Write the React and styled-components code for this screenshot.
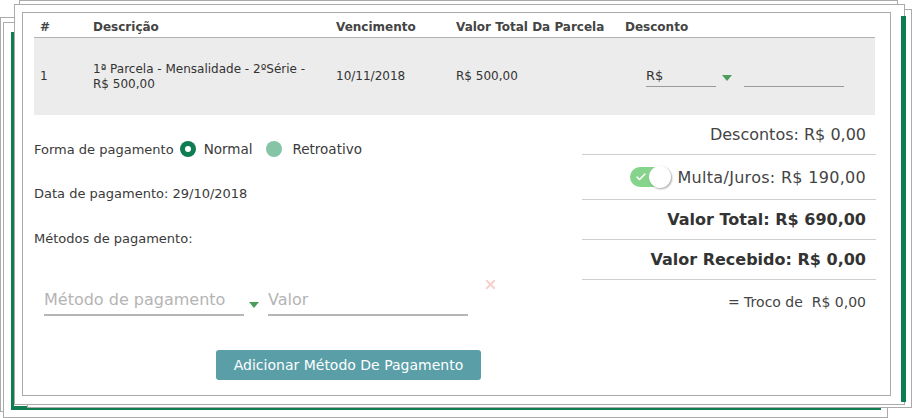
import styled, { createGlobalStyle } from 'styled-components';
import { X, Check } from 'lucide-react';

const GREEN = '#0f7c52';

const GlobalStyle = createGlobalStyle`
  html, body { margin: 0; padding: 0; background: #fff; }
  body {
    font-family: "DejaVu Sans", Verdana, sans-serif;
    color: #3a3a3a;
  }
`;

const Stage = styled.div`
  position: relative;
  width: 912px;
  height: 418px;
  padding: 12px 0 0 22px;
  box-sizing: border-box;
  overflow: hidden;
`;

// stacked sheets behind the main dialog
const Sheet = styled.div`
  position: absolute;
  box-sizing: border-box;
  left: ${({ $l }) => $l}px;
  top: ${({ $t }) => $t}px;
  width: ${({ $r, $l }) => $r - $l + 1}px;
  height: ${({ $b, $t }) => $b - $t + 1}px;
  background: #fff;
  border: 1px solid #ababab;
  ${({ $kind }) => $kind === 'greenLB' && `
    border: none;
    border-left: 3px solid ${GREEN};
    border-bottom: 4px solid ${GREEN};
  `}
  ${({ $kind }) => $kind === 'greenR' && `
    border: none;
    border-right: 5px solid ${GREEN};
  `}
`;

const sheets = [
  { l: 0, t: 17, r: 880, b: 411 },
  { l: 3, t: 22, r: 887, b: 417 },
  { l: 19, t: 0, r: 897, b: 400 },
  { l: 11, t: 32, r: 880, b: 409, kind: 'greenLB' },
  { l: 27, t: 9, r: 911, b: 407 },
  { l: 14, t: 4, r: 904, b: 404 },
  { l: 600, t: 16, r: 905, b: 401, kind: 'greenR' },
];

const Panel = styled.div`
  position: relative;
  width: 869px;
  height: 384px;
  box-sizing: border-box;
  border: 1px solid #a9a9a9;
  background: #fff;
  padding: 4px 15px 0 11px;
`;

const COLS = '53px 243px 120px 169px 1fr';

const HeadRow = styled.div`
  display: grid;
  grid-template-columns: ${COLS};
  height: 20px;
  align-items: center;
  border-bottom: 1px solid #b3b3b3;
  font-size: 12px;
  font-weight: bold;
  color: #444;
`;

const BodyRow = styled.div`
  display: grid;
  grid-template-columns: ${COLS};
  height: 77px;
  align-items: center;
  background: #ececec;
  font-size: 12px;
  line-height: 15px;
  color: #333;
`;

const Cell = styled.div`
  padding-left: 6px;
`;

const DiscountCell = styled.div`
  display: flex;
  align-items: center;
  padding-left: 27px;
`;

const SmallSelect = styled.div`
  width: 70px;
  height: 20px;
  box-sizing: border-box;
  border-bottom: 1px solid #9a9a9a;
  font-size: 13px;
  line-height: 18px;
`;

const SmallInput = styled.div`
  width: 100px;
  height: 20px;
  box-sizing: border-box;
  border-bottom: 1px solid #9a9a9a;
  margin-left: 12px;
`;

const Caret = styled.span`
  display: block;
  width: 0;
  height: 0;
  margin-left: ${({ $ml }) => $ml}px;
  margin-top: ${({ $mt }) => $mt || 0}px;
  margin-bottom: ${({ $mb }) => $mb || 0}px;
  border-left: 5px solid transparent;
  border-right: 5px solid transparent;
  border-top: 6px solid #4c9c5c;
`;

const Bottom = styled.div`
  display: grid;
  grid-template-columns: 548px 294px;
`;

const LeftCol = styled.div`
  display: flex;
  flex-direction: column;
  font-size: 13px;
  color: #3a3a3a;
`;

const Line = styled.div`
  display: flex;
  align-items: center;
  height: 24px;
  margin-top: ${({ $mt }) => $mt}px;
`;

const Option = styled.span`
  font-size: 13.5px;
`;

const Radio = styled.span`
  display: flex;
  align-items: center;
  justify-content: center;
  width: 16px;
  height: 16px;
  border-radius: 50%;
  margin-left: ${({ $ml }) => $ml}px;
  margin-right: ${({ $mr }) => $mr}px;
  background: ${({ $checked }) => ($checked ? GREEN : '#86c4a8')};
  &::after {
    content: '';
    display: ${({ $checked }) => ($checked ? 'block' : 'none')};
    width: 6px;
    height: 6px;
    border-radius: 50%;
    background: #fff;
  }
`;

const InputsRow = styled.div`
  display: flex;
  align-items: flex-end;
  margin-top: 38px;
  padding-left: 10px;
`;

const Field = styled.div`
  width: 200px;
  height: 28px;
  box-sizing: border-box;
  border-bottom: 2px solid #b5b5b5;
  font-size: 16px;
  line-height: 24px;
  color: #b4b4b4;
  margin-left: ${({ $ml }) => $ml || 0}px;
`;

const Remove = styled.span`
  align-self: flex-start;
  margin: -11px 0 0 15px;
  color: #f7cfcf;
  display: flex;
`;

const AddButton = styled.button`
  width: 265px;
  height: 30px;
  margin: 34px 0 0 182px;
  border: none;
  border-radius: 3px;
  background: #5a9ea7;
  color: #fff;
  font-family: "DejaVu Sans", Verdana, sans-serif;
  font-size: 14px;
  padding: 0;
`;

const RightCol = styled.div`
  display: flex;
  flex-direction: column;
`;

const SumRow = styled.div`
  display: flex;
  align-items: center;
  justify-content: flex-end;
  box-sizing: border-box;
  height: ${({ $h }) => $h}px;
  padding-right: 10px;
  border-bottom: ${({ $last }) => ($last ? 'none' : '1px solid #cfcfcf')};
  font-size: ${({ $fs }) => $fs || 16}px;
  font-weight: ${({ $bold }) => ($bold ? 'bold' : 'normal')};
  letter-spacing: ${({ $ls }) => $ls || 0}px;
  color: ${({ $bold }) => ($bold ? '#333' : '#444')};
`;

const Toggle = styled.span`
  position: relative;
  display: flex;
  align-items: center;
  width: 40px;
  height: 20px;
  border-radius: 10px;
  background: #86d48c;
  margin-right: 7px;
  padding-left: 5px;
  box-sizing: border-box;
  color: #fff;
`;

const Knob = styled.span`
  position: absolute;
  right: -1px;
  top: -1px;
  width: 22px;
  height: 22px;
  border-radius: 50%;
  background: #fff;
  box-shadow: 1px 1px 2px rgba(0, 0, 0, 0.35);
`;

export default function App() {
  return (
    <>
      <GlobalStyle />
      <Stage>
        {sheets.map((s, i) => (
          <Sheet key={i} $l={s.l} $t={s.t} $r={s.r} $b={s.b} $kind={s.kind} />
        ))}
        <Panel>
          <HeadRow>
            <Cell>#</Cell>
            <Cell>Descrição</Cell>
            <Cell>Vencimento</Cell>
            <Cell>Valor Total Da Parcela</Cell>
            <Cell>Desconto</Cell>
          </HeadRow>
          <BodyRow>
            <Cell>1</Cell>
            <Cell>
              1ª Parcela - Mensalidade - 2ºSérie -
              <br />
              R$ 500,00
            </Cell>
            <Cell>10/11/2018</Cell>
            <Cell>R$ 500,00</Cell>
            <DiscountCell>
              <SmallSelect>R$</SmallSelect>
              <Caret $ml={6} $mt={2} />
              <SmallInput />
            </DiscountCell>
          </BodyRow>
          <Bottom>
            <LeftCol>
              <Line $mt={22}>
                Forma de pagamento
                <Radio $checked $ml={6} $mr={8} />
                <Option>Normal</Option>
                <Radio $ml={14} $mr={10} />
                <Option>Retroativo</Option>
              </Line>
              <Line $mt={20}>Data de pagamento: 29/10/2018</Line>
              <Line $mt={21}>Métodos de pagamento:</Line>
              <InputsRow>
                <Field>Método de pagamento</Field>
                <Caret $ml={5} $mb={8} />
                <Field $ml={9}>Valor</Field>
                <Remove>
                  <X size={15} strokeWidth={3} />
                </Remove>
              </InputsRow>
              <div>
                <AddButton>Adicionar Método De Pagamento</AddButton>
              </div>
            </LeftCol>
            <RightCol>
              <SumRow $h={40}>Descontos: R$ 0,00</SumRow>
              <SumRow $h={45} $ls={0.3}>
                <Toggle>
                  <Check size={12} strokeWidth={3} />
                  <Knob />
                </Toggle>
                Multa/Juros: R$ 190,00
              </SumRow>
              <SumRow $h={40} $bold>Valor Total: R$ 690,00</SumRow>
              <SumRow $h={40} $bold>Valor Recebido: R$ 0,00</SumRow>
              <SumRow $h={44} $fs={14} $last>= Troco de&nbsp; R$ 0,00</SumRow>
            </RightCol>
          </Bottom>
        </Panel>
      </Stage>
    </>
  );
}
